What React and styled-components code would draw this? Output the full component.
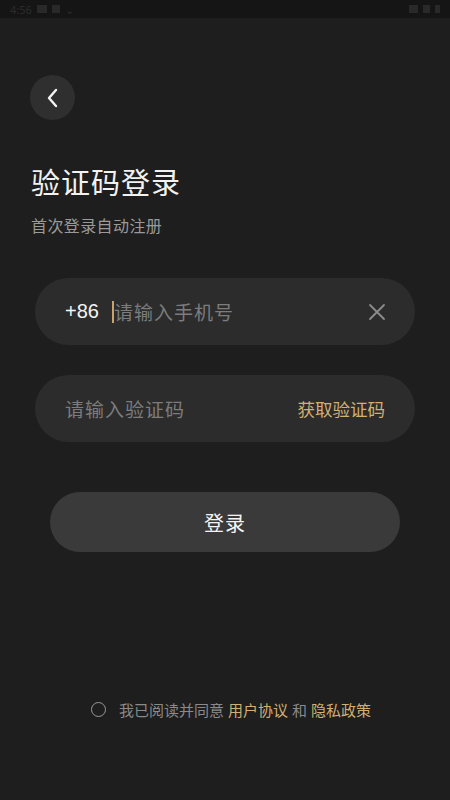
import React from "react";
import styled, { createGlobalStyle } from "styled-components";

const GlobalStyle = createGlobalStyle`
  html, body {
    margin: 0;
    padding: 0;
    background: #1e1e1e;
  }
  body {
    font-family: "Noto Sans", "Noto Sans CJK SC", sans-serif;
  }
`;

const Screen = styled.div`
  width: 450px;
  height: 800px;
  background: #1e1e1e;
  display: flex;
  flex-direction: column;
  overflow: hidden;
`;

const StatusBar = styled.div`
  height: 18px;
  background: #151515;
  display: flex;
  align-items: center;
  justify-content: space-between;
  padding: 0 10px;
  color: #2c2c2c;
  font-size: 11px;
`;

const StatusGroup = styled.div`
  display: flex;
  align-items: center;
  gap: 5px;
`;

const StatusBlock = styled.span`
  width: ${(p) => p.w || 8}px;
  height: 8px;
  background: #292929;
  display: inline-block;
`;

const Body = styled.div`
  flex: 1;
  display: flex;
  flex-direction: column;
  padding: 57px 35px 0 30px;
`;

const BackButton = styled.button`
  width: 45px;
  height: 45px;
  border-radius: 50%;
  border: none;
  background: #2f2f2f;
  display: flex;
  align-items: center;
  justify-content: center;
  padding: 0;
  cursor: pointer;
`;

const Title = styled.h1`
  margin: 43px 0 0 1px;
  font-size: 29px;
  line-height: 40px;
  font-weight: 400;
  color: #f2f2f2;
  letter-spacing: 1px;
`;

const Subtitle = styled.p`
  margin: 12px 0 0 1px;
  font-size: 16px;
  line-height: 22px;
  letter-spacing: 0.4px;
  color: #9a9a9a;
`;

const Field = styled.div`
  margin: ${(p) => p.top}px 0 0 5px;
  height: 67px;
  border-radius: 34px;
  background: #2c2c2c;
  display: flex;
  align-items: center;
  padding: 0 28px 0 30px;
`;

const Prefix = styled.span`
  font-family: "Liberation Sans", "Noto Sans CJK SC", sans-serif;
  font-size: 20px;
  color: #f4f4f4;
  margin-right: 13px;
`;

const Cursor = styled.span`
  width: 2px;
  height: 22px;
  background: #c9a46a;
`;

const Placeholder = styled.span`
  flex: 1;
  font-size: 19px;
  color: #7c7c7c;
  letter-spacing: 1px;
`;

const ClearButton = styled.button`
  border: none;
  background: none;
  padding: 0;
  display: flex;
  align-items: center;
`;

const SendCode = styled.span`
  font-size: 17.5px;
  color: #d2af74;
  margin-right: 2px;
`;

const LoginButton = styled.button`
  margin: 50px 15px 0 20px;
  height: 60px;
  border-radius: 30px;
  border: none;
  background: #3a3a3a;
  color: #f4f4f4;
  font-family: "Noto Sans", "Noto Sans CJK SC", sans-serif;
  font-size: 20px;
  letter-spacing: 1px;
  cursor: pointer;
`;

const Spacer = styled.div`
  flex: 1;
`;

const Agreement = styled.div`
  display: flex;
  align-items: center;
  justify-content: center;
  gap: 13px;
  padding: 0 0 80px 12px;
  font-size: 15px;
  color: #8a8a8a;
`;

const Radio = styled.span`
  width: 13px;
  height: 13px;
  border-radius: 50%;
  border: 1.5px solid #9a9a9a;
`;

const AgreeText = styled.span`
  display: flex;
  gap: 4px;
`;

const Link = styled.span`
  color: #d2af74;
`;

export default function App() {
  return (
    <>
      <GlobalStyle />
      <Screen>
        <StatusBar>
          <StatusGroup>
            <span>4:56</span>
            <StatusBlock w={10} />
            <StatusBlock w={8} />
            <span>⌄</span>
          </StatusGroup>
          <StatusGroup>
            <StatusBlock w={9} />
            <StatusBlock w={7} />
            <StatusBlock w={5} />
          </StatusGroup>
        </StatusBar>
        <Body>
          <BackButton aria-label="back">
            <svg width="14" height="20" viewBox="0 0 14 20">
              <path
                d="M10 2 L3 10 L10 18"
                fill="none"
                stroke="#f4f4f4"
                strokeWidth="2.4"
                strokeLinecap="round"
                strokeLinejoin="round"
              />
            </svg>
          </BackButton>
          <Title>验证码登录</Title>
          <Subtitle>首次登录自动注册</Subtitle>
          <Field top={41}>
            <Prefix>+86</Prefix>
            <Cursor />
            <Placeholder>请输入手机号</Placeholder>
            <ClearButton aria-label="clear">
              <svg width="20" height="20" viewBox="0 0 20 20">
                <path
                  d="M3 3 L17 17 M17 3 L3 17"
                  stroke="#8c8c8c"
                  strokeWidth="1.8"
                  strokeLinecap="round"
                />
              </svg>
            </ClearButton>
          </Field>
          <Field top={30}>
            <Placeholder>请输入验证码</Placeholder>
            <SendCode>获取验证码</SendCode>
          </Field>
          <LoginButton>登录</LoginButton>
          <Spacer />
        </Body>
        <Agreement>
          <Radio />
          <AgreeText>
            <span>我已阅读并同意</span>
            <Link>用户协议</Link>
            <span>和</span>
            <Link>隐私政策</Link>
          </AgreeText>
        </Agreement>
      </Screen>
    </>
  );
}
